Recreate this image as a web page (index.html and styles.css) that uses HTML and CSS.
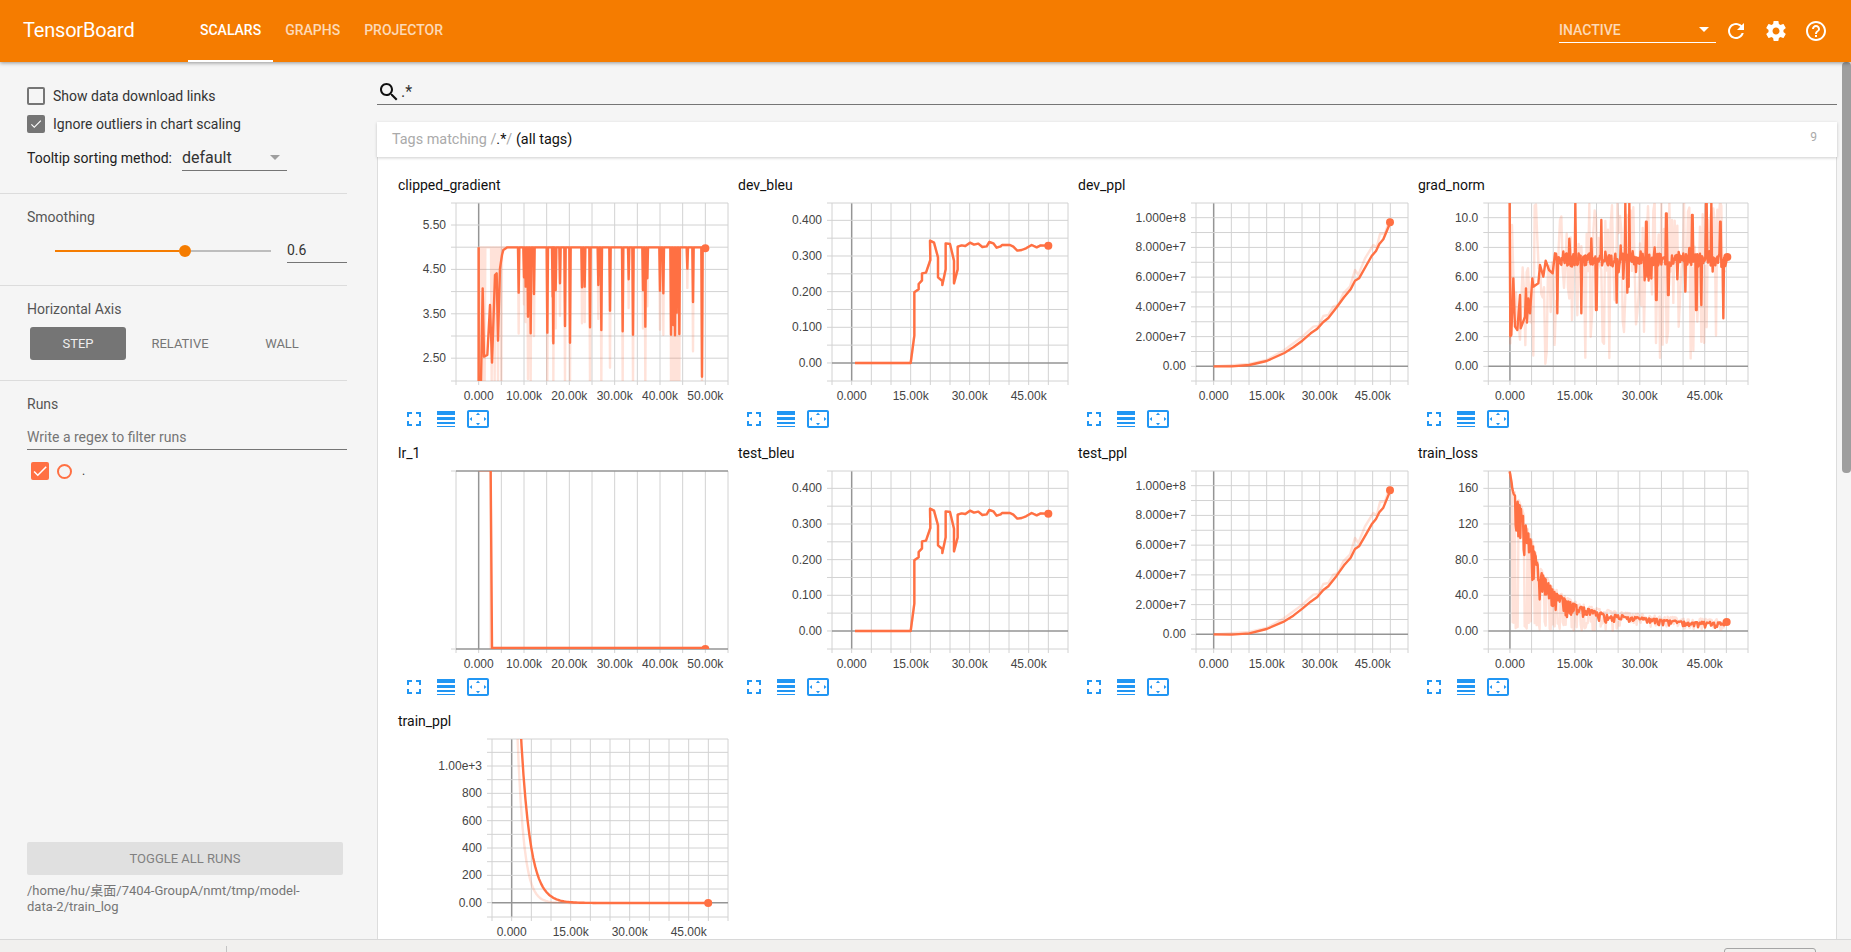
FILE: index.html
```html
<!DOCTYPE html>
<html lang="en">
<head>
<meta charset="utf-8">
<title>TensorBoard</title>
<link rel="stylesheet" href="styles.css">
</head>
<body>
<svg class="icon-defs" aria-hidden="true">
  <symbol id="i-refresh" viewBox="0 0 24 24"><path d="M17.65 6.35C16.2 4.9 14.21 4 12 4c-4.42 0-7.99 3.58-7.99 8s3.57 8 7.99 8c3.73 0 6.84-2.55 7.73-6h-2.08c-.82 2.33-3.04 4-5.65 4-3.31 0-6-2.69-6-6s2.69-6 6-6c1.66 0 3.14.69 4.22 1.78L13 11h7V4l-2.35 2.35z"/></symbol>
  <symbol id="i-settings" viewBox="0 0 24 24"><path d="M19.43 12.98c.04-.32.07-.64.07-.98s-.03-.66-.07-.98l2.11-1.65c.19-.15.24-.42.12-.64l-2-3.46c-.12-.22-.39-.3-.61-.22l-2.49 1c-.52-.4-1.08-.73-1.69-.98l-.38-2.65C14.46 2.18 14.25 2 14 2h-4c-.25 0-.46.18-.49.42l-.38 2.65c-.61.25-1.17.59-1.69.98l-2.49-1c-.23-.09-.49 0-.61.22l-2 3.46c-.13.22-.07.49.12.64l2.11 1.65c-.04.32-.07.65-.07.98s.03.66.07.98l-2.11 1.65c-.19.15-.24.42-.12.64l2 3.46c.12.22.39.3.61.22l2.49-1c.52.4 1.08.73 1.69.98l.38 2.65c.03.24.24.42.49.42h4c.25 0 .46-.18.49-.42l.38-2.65c.61-.25 1.17-.59 1.69-.98l2.49 1c.23.09.49 0 .61-.22l2-3.46c.12-.22.07-.49-.12-.64l-2.11-1.65zM12 15.5c-1.93 0-3.5-1.57-3.5-3.5s1.57-3.5 3.5-3.5 3.5 1.57 3.5 3.5-1.57 3.5-3.5 3.5z"/></symbol>
  <symbol id="i-help" viewBox="0 0 24 24"><path d="M11 18h2v-2h-2v2zm1-16C6.48 2 2 6.48 2 12s4.48 10 10 10 10-4.48 10-10S17.52 2 12 2zm0 18c-4.41 0-8-3.59-8-8s3.59-8 8-8 8 3.59 8 8-3.59 8-8 8zm0-14c-2.21 0-4 1.79-4 4h2c0-1.1.9-2 2-2s2 .9 2 2c0 2-3 1.75-3 5h2c0-2.25 3-2.5 3-5 0-2.21-1.79-4-4-4z"/></symbol>
  <symbol id="i-search" viewBox="0 0 24 24"><path d="M15.5 14h-.79l-.28-.27C15.41 12.59 16 11.11 16 9.5 16 5.91 13.09 3 9.5 3S3 5.91 3 9.5 5.91 16 9.5 16c1.61 0 3.09-.59 4.23-1.57l.27.28v.79l5 4.99L20.49 19l-4.99-5zm-6 0C7.01 14 5 11.99 5 9.5S7.01 5 9.5 5 14 7.01 14 9.5 11.99 14 9.5 14z"/></symbol>
  <symbol id="i-check" viewBox="0 0 24 24"><path d="M9 16.17L4.83 12l-1.42 1.41L9 19 21 7l-1.41-1.41z"/></symbol>
  <symbol id="i-fullscreen" viewBox="0 0 24 24"><path d="M7 14H5v5h5v-2H7v-3zm-2-4h2V7h3V5H5v5zm12 7h-3v2h5v-5h-2v3zM14 5v2h3v3h2V5h-5z"/></symbol>
  <symbol id="i-lines" viewBox="0 0 24 24"><path d="M3 17h18v-2H3v2zm0 3h18v-1H3v1zm0-7h18v-3H3v3zm0-9v4h18V4H3z"/></symbol>
  <symbol id="i-fit" viewBox="0 0 24 24"><path d="M12.01 5.5L10 8h4l-1.99-2.5zM18 10v4l2.5-1.99L18 10zM6 10l-2.5 2.01L6 14v-4zm8 6h-4l2.01 2.5L14 16zm7-13H3c-1.1 0-2 .9-2 2v14c0 1.1.9 2 2 2h18c1.1 0 2-.9 2-2V5c0-1.1-.9-2-2-2zm0 16.01H3V4.99h18v14.02z"/></symbol>
</svg>

<header class="topbar">
  <div class="logo">TensorBoard</div>
  <nav class="tabs">
    <div class="tab tab-active">SCALARS</div>
    <div class="tab">GRAPHS</div>
    <div class="tab">PROJECTOR</div>
  </nav>
  <div class="topbar-right">
    <div class="plugin-select"><span>INACTIVE</span><i class="caret caret-white"></i></div>
    <svg class="top-icon"><use href="#i-refresh"/></svg>
    <svg class="top-icon"><use href="#i-settings"/></svg>
    <svg class="top-icon"><use href="#i-help"/></svg>
  </div>
</header>

<div class="workspace">
  <aside class="sidebar">
    <section class="side-section options">
      <label class="check-row"><span class="box"></span>Show data download links</label>
      <label class="check-row"><span class="box box-on"><svg><use href="#i-check"/></svg></span>Ignore outliers in chart scaling</label>
      <div class="tooltip-row">
        <span class="tooltip-label">Tooltip sorting method:</span>
        <div class="sort-select"><span>default</span><i class="caret caret-grey"></i></div>
      </div>
    </section>
    <section class="side-section smoothing">
      <div class="side-title">Smoothing</div>
      <div class="slider-row">
        <div class="slider"><i class="slider-fill"></i><i class="slider-thumb"></i><i class="slider-rest"></i></div>
        <div class="slider-value">0.6</div>
      </div>
    </section>
    <section class="side-section axis">
      <div class="side-title">Horizontal Axis</div>
      <div class="axis-buttons">
        <div class="axis-btn axis-btn-on">STEP</div>
        <div class="axis-btn">RELATIVE</div>
        <div class="axis-btn">WALL</div>
      </div>
    </section>
    <section class="runs">
      <div class="side-title">Runs</div>
      <div class="run-filter">Write a regex to filter runs</div>
      <div class="run-row">
        <span class="run-box"><svg><use href="#i-check"/></svg></span>
        <span class="run-ring"></span>
        <span class="run-name">.</span>
      </div>
    </section>
    <footer class="side-footer">
      <div class="toggle-btn">TOGGLE ALL RUNS</div>
      <div class="log-path">/home/hu/桌面/7404-GroupA/nmt/tmp/model-data-2/train_log</div>
    </footer>
  </aside>

  <main class="main">
    <div class="search-row">
      <svg class="search-icon"><use href="#i-search"/></svg>
      <span>.*</span>
    </div>
    <div class="tag-card">
      <div class="tag-text"><span class="muted">Tags matching /</span>.*<span class="muted">/</span> (all tags)</div>
      <div class="tag-count">9</div>
    </div>
    <div class="chart-panel">
      <div class="chart-grid" id="charts"></div>
    </div>
  </main>

  <div class="scrollbar"><div class="scroll-thumb"></div></div>
</div>

<div class="statusbar">
  <div class="status-divider"></div>
  <div class="status-button"></div>
</div>
<script src="charts.js"></script>
</body>
</html>
```
FILE: styles.css
```css
* { box-sizing: border-box; }
html, body { margin: 0; height: 100%; overflow: hidden; }
body {
  display: flex;
  flex-direction: column;
  height: 952px;
  background: #f5f5f5;
  font-family: Roboto, "Noto Sans CJK SC", sans-serif;
  font-size: 14px;
  color: #212121;
}
.icon-defs { display: none; }

/* top bar */
.topbar {
  position: relative;
  z-index: 2;
  flex: none;
  display: flex;
  align-items: stretch;
  height: 62px;
  padding: 0 15px 0 23px;
  background: #f57c00;
  color: #fff;
  box-shadow: 0 1px 4px rgba(0, 0, 0, .4);
}
.logo { width: 165px; font-size: 20px; line-height: 60px; letter-spacing: -.2px; }
.tabs { display: flex; }
.tab {
  padding: 0 12px;
  line-height: 60px;
  font-size: 14px;
  font-weight: 500;
  color: rgba(255, 255, 255, .72);
  border-bottom: 2px solid transparent;
}
.tab-active { color: #fff; border-bottom-color: #fff; }
.topbar-right { margin-left: auto; display: flex; align-items: center; }
.plugin-select {
  display: flex;
  align-items: center;
  justify-content: space-between;
  width: 157px;
  height: 26px;
  margin-top: -6px;
  padding-right: 7px;
  border-bottom: 1px solid #fff;
  font-weight: 500;
  color: rgba(255, 255, 255, .72);
  transform: translateY(2px);
}
.top-icon { width: 24px; height: 24px; margin: 0 8px; fill: #fff; }
.caret {
  width: 0;
  height: 0;
  border-left: 5px solid transparent;
  border-right: 5px solid transparent;
}
.caret-white { border-top: 5px solid #fff; }
.caret-grey { border-top: 5px solid #9e9e9e; }

/* layout */
.workspace { flex: 1; display: flex; min-height: 0; }
.sidebar {
  flex: none;
  width: 377px;
  padding-right: 30px;
  display: flex;
  flex-direction: column;
}
.side-section { border-bottom: 1px solid #dcdcdc; padding-left: 27px; }
.side-title { line-height: 20px; color: #555; }

/* options */
.options { height: 132px; padding-top: 25px; }
.check-row {
  display: flex;
  align-items: center;
  height: 18px;
  margin-bottom: 10px;
  color: #333;
}
.box {
  flex: none;
  width: 18px;
  height: 18px;
  margin-right: 8px;
  border: 2px solid #757575;
  border-radius: 2px;
}
.box-on { background: #757575; }
.box svg { display: block; width: 14px; height: 14px; fill: #fff; }
.tooltip-row { display: flex; align-items: center; height: 26px; margin-top: 12px; }
.tooltip-label { width: 155px; color: #212121; }
.sort-select {
  display: flex;
  align-items: center;
  justify-content: space-between;
  width: 105px;
  height: 26px;
  padding-right: 7px;
  border-bottom: 1px solid #757575;
  font-size: 16px;
  color: #333;
}

/* smoothing */
.smoothing { height: 92px; padding-top: 13px; }
.slider-row { display: flex; align-items: center; height: 25px; margin-top: 11px; padding-left: 28px; }
.slider { display: flex; align-items: center; width: 216px; margin-right: 16px; }
.slider-fill { width: 124px; height: 2px; background: #f57c00; }
.slider-thumb { width: 12px; height: 12px; border-radius: 50%; background: #f57c00; }
.slider-rest { flex: 1; height: 2px; background: #bdbdbd; }
.slider-value {
  width: 60px;
  height: 25px;
  line-height: 24px;
  border-bottom: 1px solid #757575;
  color: #333;
}

/* axis */
.axis { height: 95px; padding-top: 13px; }
.axis-buttons { display: flex; gap: 6px; margin-top: 8px; padding-left: 3px; }
.axis-btn {
  width: 96px;
  height: 33px;
  line-height: 33px;
  border-radius: 3px;
  text-align: center;
  font-size: 13px;
  color: #757575;
}
.axis-btn-on { background: #757575; color: #eee; }

/* runs */
.runs { flex: 1; padding: 13px 0 0 27px; }
.run-filter {
  height: 26px;
  margin-top: 10px;
  line-height: 26px;
  border-bottom: 1px solid #757575;
  color: #757575;
}
.run-row { display: flex; align-items: center; height: 18px; margin-top: 12px; padding-left: 4px; }
.run-box {
  width: 18px;
  height: 18px;
  margin-right: 8px;
  border-radius: 2px;
  background: #ff7043;
}
.run-box svg { display: block; width: 18px; height: 18px; fill: #fff; }
.run-ring {
  width: 15px;
  height: 15px;
  margin-right: 10px;
  border: 2px solid #ff7043;
  border-radius: 50%;
}
.run-name { font-size: 12px; color: #333; }

/* sidebar footer */
.side-footer { padding: 0 0 24px 27px; }
.toggle-btn {
  width: 316px;
  height: 33px;
  line-height: 33px;
  border-radius: 2px;
  background: #e0e0e0;
  text-align: center;
  font-size: 13px;
  color: #808080;
}
.log-path { width: 295px; margin-top: 8px; line-height: 16px; font-size: 13px; color: #757575; }

/* main */
.main { flex: 1; min-width: 0; display: flex; flex-direction: column; padding: 17px 5px 0 0; }
.search-row {
  flex: none;
  display: flex;
  align-items: center;
  height: 26px;
  border-bottom: 1px solid #757575;
  font-size: 16px;
  color: #333;
}
.search-icon { width: 24px; height: 24px; fill: #111; }
.tag-card {
  position: relative;
  z-index: 1;
  flex: none;
  display: flex;
  justify-content: space-between;
  height: 35px;
  margin-top: 17px;
  padding: 0 20px 0 15px;
  background: #fff;
  box-shadow: 0 1px 3px rgba(0, 0, 0, .2);
}
.tag-text { line-height: 36px; font-size: 14.4px; color: #111; }
.muted { color: #aaa; }
.tag-count { line-height: 30px; font-size: 12px; color: #aaa; }
.chart-panel {
  flex: 1;
  min-height: 0;
  overflow: hidden;
  padding: 16px 0 0 10px;
  background: #fff;
  border-left: 1px solid #ddd;
  border-right: 1px solid #ddd;
}
.chart-grid { display: grid; grid-template-columns: repeat(4, 340px); grid-auto-rows: 268px; }
.chart-card { width: 340px; }
.chart-title { height: 24px; padding-left: 10px; line-height: 24px; font-size: 14px; color: #111; }
.chart-svg { display: block; width: 340px; height: 210px; overflow: visible; }
.chart-svg text { font-family: "Liberation Sans", Arial, sans-serif; font-size: 12px; fill: #444; }
.grid-line { stroke: #d2d2d2; stroke-width: 1; fill: none; }
.zero-line { stroke: #959595; stroke-width: 1.5; fill: none; }
.raw-line { stroke: #ff7043; stroke-opacity: .2; stroke-width: 2.4; fill: none; stroke-linejoin: round; }
.smooth-line { stroke: #ff7043; stroke-width: 2.4; fill: none; stroke-linejoin: round; }
.end-dot { fill: #ff7043; }
.chart-tools { display: flex; gap: 8px; height: 24px; padding-left: 14px; }
.chart-tools svg { width: 24px; height: 24px; fill: #2196f3; }

/* scrollbar */
.scrollbar { flex: none; width: 9px; background: #f5f5f5; }
.scroll-thumb { height: 411px; border-radius: 4px; background: #9e9e9e; }

/* bottom strip */
.statusbar {
  flex: none;
  display: flex;
  justify-content: space-between;
  height: 13px;
  overflow: hidden;
  background: #f1f0ee;
  border-top: 1px solid #d8d8d8;
}
.status-divider { width: 227px; height: 6px; margin-top: 6px; border-right: 1px solid #c4c4c4; }
.status-button {
  width: 92px;
  height: 20px;
  margin: 8px 35px 0 0;
  border: 1px solid #a5a5a5;
  border-radius: 3px;
  background: #f1f0ee;
}
```
FILE: charts.js
```js
(function () {
  var TOP = 6, BOTTOM = 184, RIGHT = 340;
  var seed = 7404;
  function rnd() {
    seed = (seed + 0x6D2B79F5) | 0;
    var t = Math.imul(seed ^ (seed >>> 15), 1 | seed);
    t = (t + Math.imul(t ^ (t >>> 7), 61 | t)) ^ t;
    return ((t ^ (t >>> 14)) >>> 0) / 4294967296;
  }
  function interp(pts, x) {
    for (var i = 1; i < pts.length; i++) {
      if (x <= pts[i][0]) {
        var a = pts[i - 1], b = pts[i];
        return a[1] + (b[1] - a[1]) * (x - a[0]) / (b[0] - a[0]);
      }
    }
    return pts[pts.length - 1][1];
  }
  /* points are read off the zoomed reference: scale 3, shifted by ox, oy */
  function local(pts, ox, oy) {
    return pts.map(function (p) {
      return (p[0] / 3 + ox).toFixed(2) + ',' + (p[1] / 3 + oy).toFixed(2);
    }).join(' ');
  }

  /* clipped_gradient */
  var clipSpikes = [[416,368],[432,322],[437,350],[444,440],[452,490],[462,372],[502,488],[518,380],[520,520],[527,360],[540,340],[555,468],[570,518],[606,352],[614,350],[630,472],[655,345],[664,480],[690,422],[728,484],[746,328],[759,494],[789,360],[796,470],[802,325],[840,362],[850,370],[873,494],[880,465],[885,496],[890,428],[898,492],[922,296],[939,396],[966,620]];
  function clipSmooth() {
    var p = [[296,232],[296,632],[303,632],[308,355],[312,560],[322,555],[330,405],[336,578],[345,315],[350,310],[354,512],[360,295],[366,255],[370,240],[382,232]];
    clipSpikes.forEach(function (s) { p.push([s[0] - 2, 232], [s[0], s[1]], [s[0] + 2, 232]); });
    p.push([974,236]);
    return p;
  }
  function clipRaw() {
    var p = [[296,232],[296,632]];
    [300,306,312,333,342,352,362].forEach(function (x) { p.push([x, 232], [x + 2, 632], [x + 4, 232]); });
    clipSpikes.forEach(function (s) {
      var d = Math.min(640, 232 + (s[1] - 232) * 1.9);
      p.push([s[0] - 2, 232], [s[0], d], [s[0] + 2, 232]);
    });
    [872,877,882,887,892,897].forEach(function (x) { p.push([x, 232], [x + 1, 640], [x + 3, 232]); });
    p.sort(function (a, b) { return a[0] - b[0]; });
    p.push([976,232]);
    return p;
  }

  /* grad_norm */
  function gradSmooth() {
    var p = [[329,99],[331,499],[334,495],[340,325],[345,470],[352,480],[360,375],[362,475],[375,440],[378,355],[381,458],[385,385],[390,430],[397,325],[400,350],[415,340],[420,285],[430,320],[437,272],[447,300],[458,310],[465,250]];
    var down = {472:430,526:405,544:430,589:420,650:398,682:368,742:320,769:390,805:375,856:365,889:420,904:405,970:445};
    var up = {526:99,604:150,574:205,676:99,688:99,739:155,799:130,877:135,919:99,934:99,961:155};
    for (var x = 466; x < 978; x += 2) {
      var y = 270 + (rnd() - .5) * 40;
      if (rnd() < .1) y -= rnd() * 50;
      if (rnd() < .08) y += rnd() * 70;
      for (var d in down) if (Math.abs(d - x) < 2) y = down[d];
      for (var u in up) if (Math.abs(u - x) < 2) y = up[u];
      p.push([x, y]);
    }
    p.push([982,261]);
    return p;
  }
  function gradRaw() {
    var p = [[329,99],[331,520],[336,165]];
    for (var x = 340; x < 978; x += 4) {
      var r = rnd(), lo = x < 400 ? 360 + rnd() * 190 : 330 + rnd() * 255;
      var hi = x < 400 ? 240 + rnd() * 110 : 95 + rnd() * 140;
      p.push([x, r < .42 ? lo : r < .78 ? hi : 270 + rnd() * 40]);
    }
    return p;
  }

  /* train_loss */
  var lossBase = [[329,63],[340,130],[350,145],[365,180],[385,250],[400,290],[415,350],[435,385],[460,420],[500,450],[530,465],[600,487],[700,500],[800,510],[900,515],[980,516]];
  function lossSmooth() {
    var p = [];
    for (var x = 329; x < 978; x += x < 530 ? 2 : 3) {
      var amp = x < 345 ? 0 : x < 420 ? 110 : x < 530 ? 55 : x < 650 ? 30 : 18;
      var y = interp(lossBase, x) + (rnd() < .55 ? rnd() * amp : rnd() * 5);
      p.push([x, y]);
    }
    p.push([980,516]);
    return p;
  }
  function lossRaw() {
    var p = [[329,63]];
    for (var x = 335; x < 978; x += 3) {
      var b = interp(lossBase, x);
      var r = rnd();
      var lo = x < 660 ? 543 - rnd() * 30 : b + rnd() * 25;
      p.push([x, r < .45 ? lo : b - rnd() * 10]);
    }
    return p;
  }

  /* train_ppl decays exponentially to the zero line */
  function expDecay(x0, a, k, end) {
    var p = [];
    for (var x = x0; x <= end; x += 4) p.push([x, 609 - a * Math.exp(-k * (x - x0))]);
    return p;
  }

  var bleu = [[375,579],[542,579],[553,497],[553,367],[566,358],[566,342],[576,331],[576,310],[588,308],[601,270],[600,212],[612,218],[624,262],[624,322],[637,333],[637,345],[647,298],[647,220],[660,222],[672,272],[672,340],[683,298],[683,230],[695,226],[706,228],[720,218],[732,224],[745,221],[757,231],[770,229],[778,216],[790,220],[800,233],[812,229],[816,225],[840,225],[850,230],[862,242],[875,240],[888,235],[905,225],[920,232],[932,226],[955,227]];
  var ppl = [[461,589],[515,589],[568,585],[620,573],[673,549],[700,532],[727,512],[752,490],[772,476],[790,456],[805,444],[830,412],[852,382],[872,358],[885,332],[897,325],[918,288],[935,258],[948,243],[958,222],[970,208],[990,160]];
  var pplRaw = [[461,589],[568,582],[620,570],[673,540],[727,500],[760,470],[775,468],[790,438],[805,435],[820,410],[835,405],[850,370],[870,350],[885,300],[895,315],[915,265],[940,225],[950,232],[960,192],[975,190],[990,145]];
  var ppl2 = ppl.map(function (p, i) { return [p[0], p[1] + (i % 3 === 0 ? 0 : 1)]; });
  function zx(pts) { return pts.map(function (p) { return [p[0] * 3 / 2.063, p[1]]; }); }

  var x50 = ['0.000','10.00k','20.00k','30.00k','40.00k','50.00k'];
  var x45 = ['0.000','15.00k','30.00k','45.00k'];
  var bleuY = { first: 23.33, step: 17.83, labels: {0:'0.400',2:'0.300',4:'0.200',6:'0.100',8:'0.00'}, zero: 8 };
  var pplY = { first: 20.67, step: 14.87, labels: {0:'1.000e+8',2:'8.000e+7',4:'6.000e+7',6:'4.000e+7',8:'2.000e+7',10:'0.00'}, zero: 10 };

  var charts = [
    { title: 'clipped_gradient', left: 68, xl: x50, xs: 2,
      y: { first: 28, step: 22.2, labels: {0:'5.50',2:'4.50',4:'3.50',6:'2.50'} },
      raw: clipRaw(), line: clipSmooth(), ox: -8, oy: -27, dot: [976,235] },
    { title: 'dev_bleu', left: 104, xl: x45, xs: 3, y: bleuY,
      raw: bleu, line: bleu, ox: 2, oy: -27, dot: [955,227] },
    { title: 'dev_ppl', left: 128, xl: x45, xs: 3, y: pplY,
      raw: pplRaw, line: ppl, ox: -8, oy: -27, dot: [990,157] },
    { title: 'grad_norm', left: 80.3, xl: x45, xs: 3,
      y: { first: 20.67, step: 14.87, labels: {0:'10.0',2:'8.00',4:'6.00',6:'4.00',8:'2.00',10:'0.00'}, zero: 10 },
      raw: gradRaw(), line: gradSmooth(), ox: -8, oy: -27, dot: [982,261] },
    { title: 'lr_1', left: 68, xl: x50, xs: 2, y: { first: 0, step: 0, labels: {} }, frame: true,
      raw: [[236,60],[272,60],[272,594],[916,594]], line: [[236,60],[272,60],[276,594],[916,594]], ox: 12, oy: -15, dot: [916,597] },
    { title: 'test_bleu', left: 104, xl: x45, xs: 3, y: bleuY,
      raw: bleu, line: bleu, ox: 2, oy: -27, dot: [955,227] },
    { title: 'test_ppl', left: 128, xl: x45, xs: 3, y: pplY,
      raw: pplRaw, line: ppl2, ox: -8, oy: -27, dot: [990,157] },
    { title: 'train_loss', left: 80.3, xl: x45, xs: 3,
      y: { first: 23.33, step: 17.83, labels: {0:'160',2:'120',4:'80.0',6:'40.0',8:'0.00'}, zero: 8 },
      raw: lossRaw(), line: lossSmooth(), ox: -8, oy: -15, dot: [980,516] },
    { title: 'train_ppl', left: 104, xl: x45, xs: 3,
      y: { first: 19.33, step: 13.67, labels: {1:'1.00e+3',3:'800',5:'600',7:'400',9:'200',11:'0.00'}, zero: 11 },
      raw: zx(expDecay(1066, 560, .075, 1230)), line: zx(expDecay(1072, 580, .052, 1461)), ox: -388, oy: -33, dot: [1461 * 3 / 2.063, 609] }
  ];

  function seg(cls, x1, y1, x2, y2) {
    return '<line class="' + cls + '" x1="' + x1.toFixed(2) + '" y1="' + y1.toFixed(2) + '" x2="' + x2.toFixed(2) + '" y2="' + y2.toFixed(2) + '"/>';
  }
  function render(c, i) {
    var L = c.left, pitch = (RIGHT - L) / 12, zeroX = L + pitch, s = '';
    for (var k = 0; k <= 12; k++) {
      var x = L + k * pitch;
      s += seg(k === 1 ? 'zero-line' : 'grid-line', x, TOP, x, k === 1 ? BOTTOM : BOTTOM + 4);
      if (k === 1) s += seg('grid-line', x, BOTTOM, x, BOTTOM + 4);
    }
    if (c.frame) {
      s += seg('zero-line', L, TOP, RIGHT, TOP) + seg('zero-line', L, BOTTOM, RIGHT, BOTTOM);
      s += seg('grid-line', L - 5, TOP, L, TOP) + seg('grid-line', L - 5, BOTTOM, L, BOTTOM);
    } else {
      s += seg('grid-line', L - 5, TOP, RIGHT, TOP) + seg('grid-line', L - 5, BOTTOM, RIGHT, BOTTOM);
      for (var h = 0; c.y.first + h * c.y.step < BOTTOM - 1; h++) {
        var yy = c.y.first + h * c.y.step;
        if (h === c.y.zero) {
          s += seg('grid-line', L - 5, yy, L, yy) + seg('zero-line', L, yy, RIGHT, yy);
        } else {
          s += seg('grid-line', L - 5, yy, RIGHT, yy);
        }
        if (c.y.labels[h]) {
          s += '<text x="' + (L - 10) + '" y="' + (yy + 4).toFixed(2) + '" text-anchor="end">' + c.y.labels[h] + '</text>';
        }
      }
    }
    c.xl.forEach(function (t, n) {
      s += '<text x="' + (zeroX + n * c.xs * pitch).toFixed(2) + '" y="203" text-anchor="middle">' + t + '</text>';
    });
    var id = 'plot' + i;
    s += '<clipPath id="' + id + '"><rect x="' + L + '" y="' + TOP + '" width="' + (RIGHT - L) + '" height="' + (BOTTOM - TOP) + '"/></clipPath>';
    s += '<g clip-path="url(#' + id + ')">';
    s += '<polyline class="raw-line" points="' + local(c.raw, c.ox, c.oy) + '"/>';
    s += '<polyline class="smooth-line" points="' + local(c.line, c.ox, c.oy) + '"/>';
    s += '<circle class="end-dot" cx="' + (c.dot[0] / 3 + c.ox).toFixed(2) + '" cy="' + (c.dot[1] / 3 + c.oy).toFixed(2) + '" r="4"/>';
    s += '</g>';
    return '<div class="chart-card"><div class="chart-title">' + c.title + '</div>' +
      '<svg class="chart-svg" viewBox="0 0 340 210">' + s + '</svg>' +
      '<div class="chart-tools"><svg><use href="#i-fullscreen"/></svg><svg><use href="#i-lines"/></svg><svg><use href="#i-fit"/></svg></div></div>';
  }
  document.getElementById('charts').innerHTML = charts.map(render).join('');
})();
```
